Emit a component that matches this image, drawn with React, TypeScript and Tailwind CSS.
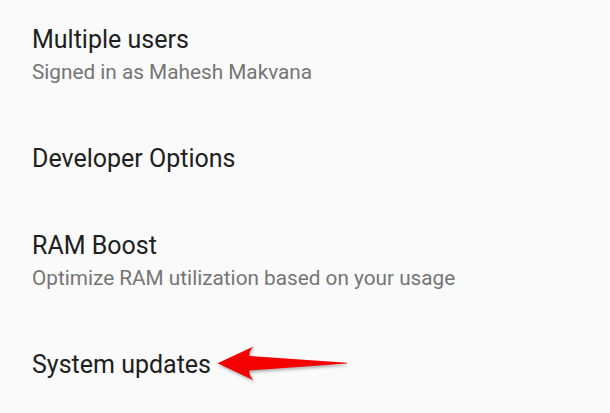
const rows = [
  { title: 'Multiple users', summary: 'Signed in as Mahesh Makvana' },
  { title: 'Developer Options' },
  { title: 'RAM Boost', summary: 'Optimize RAM utilization based on your usage' },
  { title: 'System updates', pointed: true }
]

function RedArrow() {
  return (
    <svg
      className="absolute left-[210px] top-[340px] drop-shadow-[1px_2px_1.5px_rgba(0,0,0,0.3)]"
      width="145"
      height="48"
      viewBox="210 340 145 48"
    >
      <path
        d="M217.5 363.3 L253.5 346.5 Q248.5 352 249.5 356 L347 362.8 L347 363.6 L249.5 370.6 Q248.5 375 253.5 380.2 Z"
        fill="#f50000"
      />
    </svg>
  )
}

export default function App() {
  return (
    <div className="relative h-[413px] w-[610px] overflow-hidden bg-[#fafafa] font-['Roboto',sans-serif]">
      <ul className="flex flex-col">
        {rows.map((row) => (
          <li key={row.title} className="flex flex-col pb-[31px] pl-8 pt-6">
            <span className="text-[25px] leading-8 text-[#202020]">{row.title}</span>
            {row.summary ? (
              <span className="text-[20.75px] leading-8 text-[#757575]">{row.summary}</span>
            ) : null}
          </li>
        ))}
      </ul>
      <RedArrow />
    </div>
  )
}
